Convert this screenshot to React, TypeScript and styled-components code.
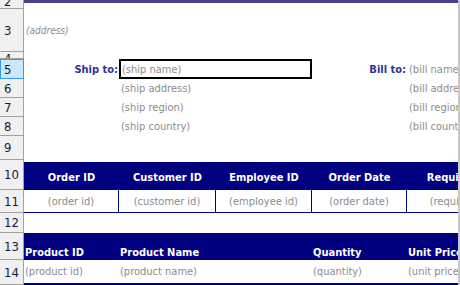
import React from "react";
import styled, { createGlobalStyle } from "styled-components";

const Global = createGlobalStyle`
  html, body { margin: 0; padding: 0; background: #fff; overflow: hidden; }
  body { font-family: Tahoma, "DejaVu Sans Condensed", "Liberation Sans", sans-serif; }
`;

const NAVY = "#000080";
const COLS = "95px 97px 96px 95px 120px";

const Sheet = styled.div`
  width: 458px;
  height: 285px;
  border-right: 2px solid #c8c8c8;
  overflow: hidden;
  background: #fff;
`;

const Row = styled.div<{ $h: number }>`
  display: grid;
  grid-template-columns: 24px 1fr;
  height: ${(p) => p.$h}px;
  overflow: hidden;
`;

const RowHead = styled.div<{ $sel?: boolean; $align?: string }>`
  box-sizing: border-box;
  background: ${(p) => (p.$sel ? "#cce8ff" : "#f0f0f0")};
  border-right: 1px solid ${(p) => (p.$sel ? "#3399ff" : "#a0a0a0")};
  border-bottom: 1px solid ${(p) => (p.$sel ? "#3399ff" : "#a0a0a0")};
  ${(p) => (p.$sel ? "border-top: 1px solid #3399ff; border-left: 1px solid #3399ff;" : "")}
  display: flex;
  align-items: ${(p) => p.$align || "center"};
  padding-left: ${(p) => (p.$sel ? 3 : 4)}px;
  font-size: 13px;
  color: #1a1a3a;
  overflow: hidden;
  line-height: 13px;
`;

const Cells = styled.div`
  display: grid;
  grid-template-columns: ${COLS};
  overflow: hidden;
  min-width: 0;
`;

const TopBar = styled.div`
  border-top: 3px solid #4a3f8c;
`;

const Address = styled.div`
  display: flex;
  align-items: center;
  padding-left: 2px;
  font-size: 10px;
  font-style: italic;
  color: #8c8c8c;
`;

const Label = styled.div`
  text-align: right;
  font-weight: bold;
  font-size: 11px;
  color: #333399;
  align-self: center;
  padding-right: 1px;
`;

const Value = styled.div<{ $span?: number }>`
  grid-column: span ${(p) => p.$span || 1};
  font-size: 11px;
  color: #8c8c8c;
  align-self: center;
  padding-left: 2px;
  white-space: nowrap;
`;

const NameBox = styled.div`
  grid-column: span 2;
  box-sizing: border-box;
  border: 2px solid #000;
  font-size: 11px;
  color: #8c8c8c;
  padding-left: 1px;
  display: flex;
  align-items: center;
  white-space: nowrap;
`;

const Band = styled(Cells)<{ $top: number }>`
  margin-top: ${(p) => p.$top}px;
  background: ${NAVY};
`;

const HeadCell = styled.div<{ $left?: boolean; $span?: number }>`
  grid-column: span ${(p) => p.$span || 1};
  color: #fff;
  font-weight: bold;
  font-size: 11px;
  text-align: ${(p) => (p.$left ? "left" : "center")};
  padding-left: ${(p) => (p.$left ? 1 : 0)}px;
  align-self: end;
  padding-bottom: ${(p) => (p.$left ? 1 : 6)}px;
  white-space: nowrap;
  overflow: hidden;
`;

const DataRow = styled(Cells)<{ $bottom: number }>`
  border-bottom: ${(p) => p.$bottom}px solid ${NAVY};
`;

const DataCell = styled.div<{ $left?: boolean; $span?: number; $line?: boolean }>`
  grid-column: span ${(p) => p.$span || 1};
  font-size: 11px;
  color: #8c8c8c;
  padding-left: ${(p) => (p.$left ? 1 : 0)}px;
  border-right: ${(p) => (p.$line ? `1px solid ${NAVY}` : "none")};
  display: flex;
  align-items: center;
  justify-content: ${(p) => (p.$left ? "flex-start" : "center")};
  white-space: nowrap;
  overflow: hidden;
`;

const Empty = styled.div``;

export default function App() {
  const orderHeads = ["Order ID", "Customer ID", "Employee ID", "Order Date", "Required Date"];
  const orderData = ["(order id)", "(customer id)", "(employee id)", "(order date)", "(required date)"];

  return (
    <>
      <Global />
      <Sheet>
        <Row $h={9}>
          <RowHead $align="flex-end">2</RowHead>
          <TopBar />
        </Row>
        <Row $h={43}>
          <RowHead>3</RowHead>
          <Address>(address)</Address>
        </Row>
        <Row $h={7}>
          <RowHead $align="flex-start">4</RowHead>
          <Empty />
        </Row>
        <Row $h={20}>
          <RowHead $sel>5</RowHead>
          <Cells>
            <Label>Ship to:</Label>
            <NameBox>(ship name)</NameBox>
            <Label>Bill to:</Label>
            <Value>(bill name)</Value>
          </Cells>
        </Row>
        {[
          ["6", "(ship address)", "(bill address)"],
          ["7", "(ship region)", "(bill region)"],
          ["8", "(ship country)", "(bill country)"],
        ].map(([n, s, b]) => (
          <Row $h={19} key={n}>
            <RowHead>{n}</RowHead>
            <Cells>
              <Empty />
              <Value $span={2}>{s}</Value>
              <Empty />
              <Value>{b}</Value>
            </Cells>
          </Row>
        ))}
        <Row $h={24}>
          <RowHead>9</RowHead>
          <Empty />
        </Row>
        <Row $h={30}>
          <RowHead>10</RowHead>
          <Band $top={2}>
            {orderHeads.map((h) => (
              <HeadCell key={h}>{h}</HeadCell>
            ))}
          </Band>
        </Row>
        <Row $h={23}>
          <RowHead>11</RowHead>
          <DataRow $bottom={1}>
            {orderData.map((d, i) => (
              <DataCell key={d} $line={i < 4}>
                {d}
              </DataCell>
            ))}
          </DataRow>
        </Row>
        <Row $h={20}>
          <RowHead>12</RowHead>
          <Empty />
        </Row>
        <Row $h={27}>
          <RowHead>13</RowHead>
          <Band $top={0}>
            <HeadCell $left>Product ID</HeadCell>
            <HeadCell $left $span={2}>Product Name</HeadCell>
            <HeadCell $left>Quantity</HeadCell>
            <HeadCell $left>Unit Price</HeadCell>
          </Band>
        </Row>
        <Row $h={25}>
          <RowHead>14</RowHead>
          <DataRow $bottom={2}>
            <DataCell $left>(product id)</DataCell>
            <DataCell $left $span={2}>(product name)</DataCell>
            <DataCell $left>(quantity)</DataCell>
            <DataCell $left>(unit price)</DataCell>
          </DataRow>
        </Row>
      </Sheet>
    </>
  );
}
